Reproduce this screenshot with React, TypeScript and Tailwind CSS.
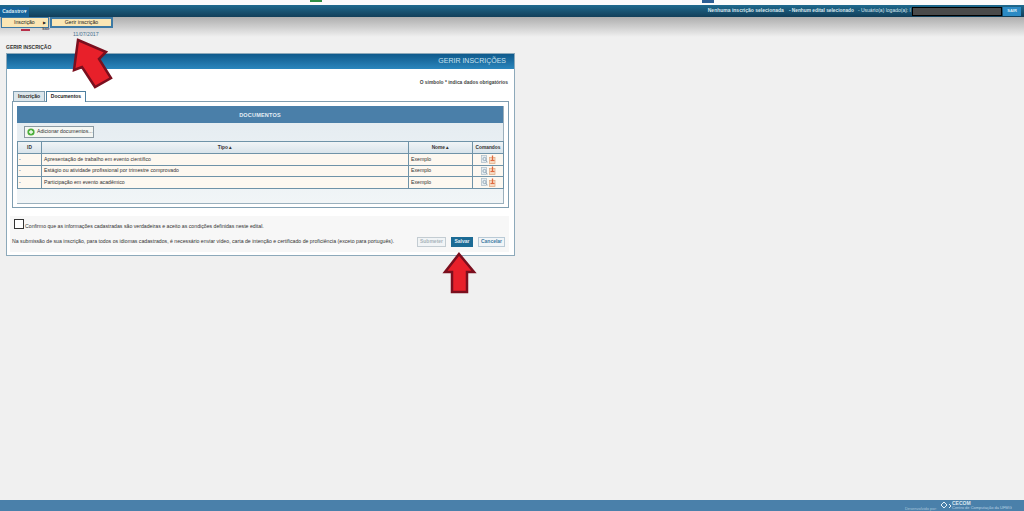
const rows = [
  "Apresentação de trabalho em evento científico",
  "Estágio ou atividade profissional por trimestre comprovado",
  "Participação em evento acadêmico",
]

const SearchDocIcon = () => (
  <svg width="7" height="8" viewBox="0 0 7 8">
    <rect x="0.5" y="0.5" width="5" height="7" fill="#e6edf1" stroke="#a9bac6" strokeWidth="0.7" />
    <circle cx="3.5" cy="4" r="1.6" fill="none" stroke="#8aa0af" strokeWidth="0.8" />
    <path d="M4.6 5.2 6.6 7.4" stroke="#8aa0af" strokeWidth="0.9" />
  </svg>
)

const DeleteDocIcon = () => (
  <svg width="7" height="9" viewBox="0 0 7 9">
    <rect x="0.5" y="2.5" width="5.5" height="6" fill="#f5dcc6" stroke="#e0a77e" strokeWidth="0.7" />
    <path d="M3.5 0.5v5" stroke="#e0693f" strokeWidth="1.3" />
    <path d="M1.5 5.5h4" stroke="#e0693f" strokeWidth="1.1" />
  </svg>
)

const App = () => {
  return (
    <div className="relative flex h-[511px] w-[1024px] flex-col overflow-hidden bg-[#f0f0f0] font-['Liberation_Sans',Arial,sans-serif] text-[#222]">
      {/* top strip, the cropped browser page */}
      <div className="flex h-[5px] bg-[#fbfbfb]">
        <div className="ml-[310px] h-[2px] w-[12px] bg-[#2f8f46]" />
        <div className="ml-[380px] h-[3px] w-[12px] bg-[#2d5f94]" />
      </div>

      {/* header bar */}
      <div className="flex h-[12px] items-center justify-end whitespace-nowrap bg-gradient-to-b from-[#1f6a8e] to-[#123f5a] pr-[3px] text-[5px] font-bold text-[#d8e6ee]">
        <span className="mr-[5px]">Nenhuma inscrição selecionada</span>
        <span className="mr-[4px] text-[4.8px]">- Nenhum edital selecionado</span>
        <span className="font-normal">- Usuário(a) logado(a): I</span>
        <div className="ml-[1px] h-[9px] w-[90px] border border-black bg-[#4a4a4a]" />
        <div className="ml-[1px] flex h-[9px] w-[18px] items-center justify-center bg-[#2b8ac4] text-[4px] text-[#dcecf5]">
          SAIR
        </div>
      </div>

      {/* menu strip with the date */}
      <div className="h-[20px] bg-gradient-to-b from-[#aeaeae] to-[#f0f0f0] pl-[73px] pt-[14px] text-[5.2px] leading-[6px] text-[#46708f]">
        11/07/2017
      </div>

      <div className="ml-[6px] mt-[7px] h-[6px] text-[5px] font-bold leading-[6px] text-[#333]">GERIR INSCRIÇÃO</div>

      {/* main panel */}
      <div className="ml-[6px] mt-[3px] h-[203px] w-[509px] border border-[#8da9ba] bg-white">
        <div className="flex h-[15px] items-center justify-end bg-gradient-to-b from-[#0f5a8c] to-[#2a86bd] pr-[8px] text-[7px] text-[#c9e2f0]">
          GERIR INSCRIÇÕES
        </div>

        <div className="mt-[10px] pr-[6px] text-right text-[4.9px] font-bold leading-[7px] text-[#444]">
          O símbolo * indica dados obrigatórios
        </div>

        {/* tabs */}
        <div className="ml-[6px] mt-[4px] flex h-[11px] items-end gap-[1px] text-[5px] font-bold">
          <div className="flex h-[10px] w-[32px] items-center justify-center border border-b-0 border-[#7f9db0] bg-[#dce6ec]">
            Inscrição
          </div>
          <div className="relative top-[1px] flex h-[11px] w-[40px] items-center justify-center border border-b-0 border-[#4d7f9f] bg-white">
            Documentos
          </div>
        </div>

        <div className="ml-[5px] h-[107px] w-[497px] border border-[#7f9db0] p-[4px]">
          <div className="h-[98px] w-[487px] border-b border-r border-[#9bb0bd] bg-gradient-to-b from-[#e3ebf0] to-[#f1f5f7]">
            <div className="flex h-[17px] items-center justify-center bg-[#4a7fa9] pt-[1px] text-[5.5px] font-bold tracking-[0.2px] text-[#e4eef5]">
              DOCUMENTOS
            </div>

            <div className="flex h-[18px] items-center pl-[7px]">
              <div className="flex h-[12px] w-[70px] items-center gap-[2px] whitespace-nowrap border border-[#8b9aa3] bg-[#f4f6f2] pl-[2px] text-[5.2px] text-[#333]">
                <svg width="8" height="8" viewBox="0 0 8 8">
                  <circle cx="4" cy="4" r="3.6" fill="#4caf3c" />
                  <path d="M4 2v4M2 4h4" stroke="#f3fbf0" strokeWidth="1.3" />
                </svg>
                Adicionar documentos...
              </div>
            </div>

            <table className="w-[486px] table-fixed border-collapse text-[5.2px] text-[#333]">
              <colgroup>
                <col className="w-[24px]" />
                <col className="w-[367px]" />
                <col className="w-[64px]" />
                <col className="w-[31px]" />
              </colgroup>
              <thead>
                <tr className="h-[12px] bg-gradient-to-b from-[#f0f4f6] to-[#d7e3ea] text-[4.8px] font-bold">
                  <th className="border border-[#6f93a8] p-0">ID</th>
                  <th className="border border-[#6f93a8] p-0">Tipo ▴</th>
                  <th className="border border-[#6f93a8] p-0">Nome ▴</th>
                  <th className="border border-[#6f93a8] p-0">Comandos</th>
                </tr>
              </thead>
              <tbody>
                {rows.map((tipo) => (
                  <tr key={tipo} className="h-[11.5px] bg-[#fdf8f0]">
                    <td className="border border-[#6f93a8] p-0 pl-[1px] pt-[1px]">-</td>
                    <td className="border border-[#6f93a8] p-0 pl-[2px] pt-[1px]">{tipo}</td>
                    <td className="border border-[#6f93a8] p-0 pl-[2px] pt-[1px]">Exemplo</td>
                    <td className="border border-[#6f93a8] p-0">
                      <div className="flex items-center justify-center gap-[1px]">
                        <SearchDocIcon />
                        <DeleteDocIcon />
                      </div>
                    </td>
                  </tr>
                ))}
              </tbody>
            </table>
          </div>
        </div>

        {/* confirm and actions */}
        <div className="ml-[3px] mt-[8px] h-[36px] w-[499px] bg-[#f7f7f7] text-[5.2px] text-[#333]">
          <div className="flex items-end pl-[4px] pt-[3px]">
            <div className="h-[10px] w-[10px] border border-[#333] bg-white" />
            <span className="ml-[1px] leading-[6px]">
              Confirmo que as informações cadastradas são verdadeiras e aceito as condições definidas neste edital.
            </span>
          </div>
          <div className="mt-[7px] flex h-[12px] items-center pl-[2px]">
            <span className="flex-1 whitespace-nowrap">
              Na submissão de sua inscrição, para todos os idiomas cadastrados, é necessário enviar vídeo, carta de intenção e certificado de proficiência (exceto para português).
            </span>
            <div className="flex h-[10px] w-[29px] items-center justify-center border border-[#c3ccd2] bg-[#f1f4f6] text-[5px] font-bold text-[#a9b4bb]">
              Submeter
            </div>
            <div className="ml-[5px] flex h-[10px] w-[22px] items-center justify-center bg-[#1c6b95] text-[5px] font-bold text-[#e2eef5]">
              Salvar
            </div>
            <div className="ml-[5px] mr-[4px] flex h-[10px] w-[27px] items-center justify-center border border-[#b9cad6] bg-[#f1f5f8] text-[5px] font-bold text-[#3f7ba3]">
              Cancelar
            </div>
          </div>
        </div>
      </div>

      {/* footer */}
      <div className="mt-auto flex h-[11px] items-start justify-end whitespace-nowrap bg-[#4a80aa] text-[#dbe8f1]">
        <span className="mr-[3px] mt-[6px] text-[4px] leading-[5px] text-[#a9c6da]">Desenvolvido por:</span>
        <svg width="12" height="10" viewBox="0 0 12 10" className="mt-[1px]">
          <path d="M4 1 7 4 4 7 1 4ZM9 3l2 2-2 2" fill="none" stroke="#e6f0f6" strokeWidth="1" />
        </svg>
        <div className="mr-[12px] flex w-[60px] flex-col pt-[1px] text-[4px] leading-[4px]">
          <span className="text-[5px] font-bold leading-[5px]">CECOM</span>
          <span className="text-[#b9d2e2]">Centro de Computação da UFMG</span>
        </div>
      </div>

      {/* open menu over the strip */}
      <div className="absolute left-0 top-[7px] flex h-[10px] w-[29px] items-center justify-center bg-[#16639a] text-[5px] font-bold text-[#dcecf5]">
        Cadastro▾
      </div>
      <div className="absolute left-[1px] top-[17px] flex h-[11px] w-[48px] items-center border border-[#3e7aa5] bg-[#fbe6b4] text-[5.2px]">
        <span className="ml-[12px] flex-1">Inscrição</span>
        <span className="mr-[2px] text-[4px]">▶</span>
      </div>
      <div className="absolute left-[50px] top-[17px] flex h-[11px] w-[63px] items-center justify-center border-2 border-[#3e7aa5] bg-[#fbe6b4] text-[5.2px]">
        Gerir inscrição
      </div>
      <div className="absolute left-[21px] top-[29px] h-[2px] w-[9px] bg-[#b8304a]" />
      <div className="absolute left-[42px] top-[27px] text-[4px] font-bold leading-[4px] text-[#555]">Sair</div>

      {/* red arrows */}
      <svg className="absolute left-0 top-0" width="520" height="300" viewBox="0 0 520 300">
        <path
          d="M78 40 106 52 99 59 111 78 95 87 82 67 74 70Z"
          fill="#e8202a"
          stroke="#7a0f1e"
          strokeWidth="2.5"
        />
        <path
          d="M459 254 474 272 467 272 467 292 452 292 452 272 445 272Z"
          fill="#e8202a"
          stroke="#7a0f1e"
          strokeWidth="2.5"
        />
      </svg>
    </div>
  )
}

export default App
